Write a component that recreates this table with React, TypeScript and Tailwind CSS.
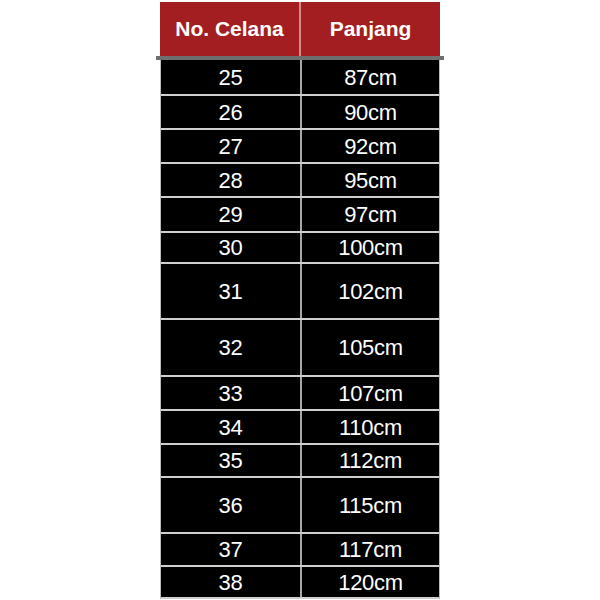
import React from "react";

const rows: [string, string, number][] = [
  ["25", "87cm", 36],
  ["26", "90cm", 34],
  ["27", "92cm", 34],
  ["28", "95cm", 34],
  ["29", "97cm", 35],
  ["30", "100cm", 31],
  ["31", "102cm", 56],
  ["32", "105cm", 57],
  ["33", "107cm", 34],
  ["34", "110cm", 34],
  ["35", "112cm", 33],
  ["36", "115cm", 56],
  ["37", "117cm", 33],
  ["38", "120cm", 32],
];

export default function App() {
  return (
    <div
      className="w-[600px] h-[600px] bg-white flex flex-col items-center pt-[2px] overflow-hidden"
      style={{ fontFamily: '"Liberation Sans", Arial, sans-serif' }}
    >
      <div className="w-[288px] flex flex-col items-center">
        <div className="w-[280px] h-[54px] flex bg-[#a21e20] text-white font-bold text-[21px]">
          <div className="w-[141px] h-full flex items-center justify-center border-r-2 border-[#d88a8a]">
            No. Celana
          </div>
          <div className="flex-1 h-full flex items-center justify-center">Panjang</div>
        </div>
        <div className="w-[288px] h-[4px] bg-[#6f6f6f]" />
        <div className="w-[280px] flex flex-col bg-black border-x border-[#bdbdbd] text-white text-[22px] tracking-[-0.3px]">
          {rows.map(([n, p, h]) => (
            <div
              key={n}
              className="flex border-b-2 border-[#cfcfcf] box-border"
              style={{ height: h }}
            >
              <div className="w-[141px] flex items-center justify-center border-r-2 border-[#a8a8a8]">
                {n}
              </div>
              <div className="flex-1 flex items-center justify-center">{p}</div>
            </div>
          ))}
        </div>
      </div>
    </div>
  );
}
